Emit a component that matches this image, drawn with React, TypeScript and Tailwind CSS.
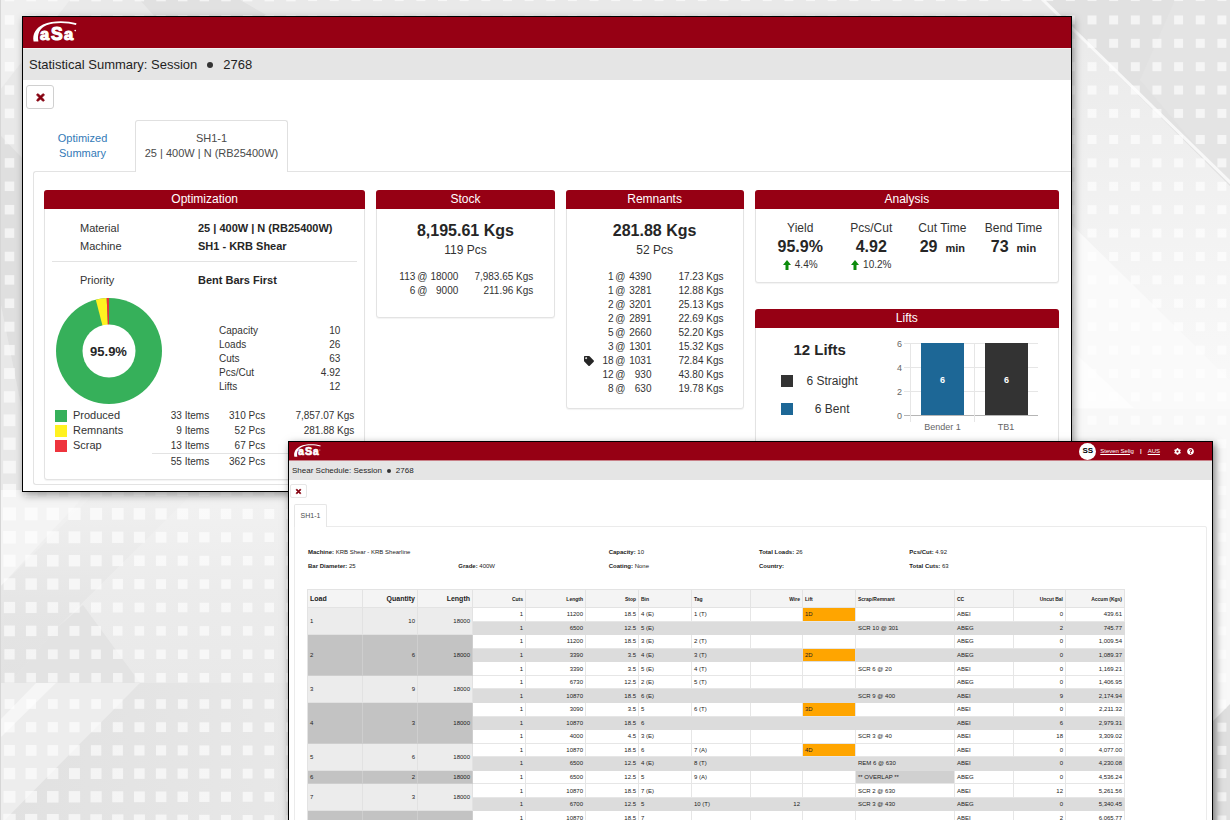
import type { ReactNode } from "react";
import { FaCog, FaQuestionCircle, FaTag, FaTimes } from "react-icons/fa";

/* ---------- Backdrop ---------- */

const range = (start: number, end: number, step: number) => {
  const out: number[] = [];
  for (let v = start; v <= end; v += step) out.push(v);
  return out;
};

const dotRows = [...range(-3.4, 114, 23.36), ...range(139.5, 679, 23.4), ...range(704, 825, 23.2)];
const dotCols = range(9.5, 1240, 21.65);

function dotSize(x: number, y: number) {
  if (x > 300) return 9;
  const near = Math.max(0, 1 - (Math.abs(y - 500) + x * 0.6) / 200);
  const low = y > 690 ? ((y - 690) / 130) * Math.max(0, 1 - x / 300) * 3 : 0;
  return 9.5 + near * 4 + low;
}

function Backdrop() {
  return (
    <svg
      aria-hidden="true"
      className="absolute inset-0 h-full w-full"
      viewBox="0 0 1230 820"
      preserveAspectRatio="xMidYMid slice"
    >
      <defs>
        <linearGradient id="fadeRight" x1="0" y1="0" x2="0" y2="1">
          <stop offset="0" stopColor="#e9e9e9" />
          <stop offset="0.6" stopColor="#f4f4f4" />
          <stop offset="1" stopColor="#fbfbfb" />
        </linearGradient>
        <linearGradient id="fadeLeft" x1="0" y1="0" x2="0" y2="1">
          <stop offset="0" stopColor="#f2f2f2" />
          <stop offset="0.5" stopColor="#ececec" />
          <stop offset="1" stopColor="#e9e9e9" />
        </linearGradient>
        <linearGradient id="fadeBand" x1="0" y1="0" x2="0" y2="1">
          <stop offset="0" stopColor="#f0f0f0" />
          <stop offset="0.6" stopColor="#e5e5e5" />
          <stop offset="1" stopColor="#e2e2e2" />
        </linearGradient>
        <linearGradient id="fadeShade" x1="0" y1="0" x2="1" y2="0">
          <stop offset="0" stopColor="#e1e1e1" />
          <stop offset="1" stopColor="#e8e8e8" />
        </linearGradient>
      </defs>
      <rect width="1230" height="820" fill="#e8e8e8" />
      <rect width="1230" height="17" fill="#e9e9e9" />
      <path d="M0 0H70L0 90Z" fill="#efefef" />
      <path d="M140 0H240L270 17H155Z" fill="#e1e1e1" />
      <path d="M0 300V135L24 160V420Z" fill="#dfdfdf" />
      <rect y="490" width="300" height="193" fill="url(#fadeLeft)" />
      <path d="M0 587L90 490H0Z" fill="#f4f4f4" />
      <path d="M0 587L90 498H188L57 628L10 683H0Z" fill="url(#fadeBand)" />
      <path d="M83 605L140 683H10L57 628Z" fill="#e3e3e3" />
      <path d="M0 683H140L5 820H0Z" fill="#ededed" />
      <path d="M36 683H56L0 738V720Z" fill="#f6f6f6" />
      <path d="M140 683L5 820H300V683Z" fill="url(#fadeShade)" />
      <rect x="1072" width="158" height="441" fill="url(#fadeRight)" />
      <path d="M1042 0H1230V186Z" fill="#e1e1e1" />
      <path d="M1140 80L1175 0H1230V186Z" fill="#e4e4e4" />
      <path d="M1041 -2L1232 184" stroke="#f8f8f8" strokeWidth="3" />
      <path d="M1072 225L1230 380V409H1072Z" fill="#fafafa" />
      <path d="M1072 350L1134 408H1072Z" fill="#fdfdfd" />
      <path d="M1072 409H1230V442H1072Z" fill="#f8f8f8" />
      <rect x="1212" y="441" width="18" height="280" fill="#f8f8f8" />
      <path d="M1212 722L1230 704V820H1212Z" fill="#dfdfdf" />
      <g fill="#ffffff" fillOpacity="0.62">
        {dotRows.map((y) =>
          dotCols.map((x) => {
            const s = dotSize(x, y);
            return <rect key={`${x}-${y}`} x={x - s / 2} y={y - s / 2} width={s} height={s} />;
          }),
        )}
      </g>
      <rect width="1" height="820" fill="#d6d6d6" />
    </svg>
  );
}

/* ---------- Shared pieces ---------- */

function Logo({ className }: { className: string }) {
  return (
    <svg viewBox="0 0 44 24" className={`overflow-visible ${className}`} role="img" aria-label="aSa">
      <path
        d="M0.600 20.500C-1 13 3 7 10 3.500C20 -0.800 34 -0.200 43.500 2.300L43 4C34 1.400 22 1 13.500 4.300C6.500 7.500 4 13 5.400 20.500Z"
        fill="#fff"
      />
      <g
        fill="#fff"
        stroke="#fff"
        strokeWidth="1.1"
        fontFamily="'Liberation Sans', Arial, sans-serif"
        fontWeight="700"
      >
        <text x="7" y="18.500" fontSize="16.500">a</text>
        <text x="18" y="18.500" fontSize="17.500">S</text>
        <text x="31" y="18.500" fontSize="16.500">a</text>
      </g>
      <circle cx="42.200" cy="9.600" r="0.8" fill="#fff" />
    </svg>
  );
}

function Card({ title, className, children }: { title: string; className?: string; children: ReactNode }) {
  return (
    <section className={`rounded-[3px] border border-[#e3e3e3] bg-white shadow-[0_1px_1px_#0000000d] ${className ?? ""}`}>
      <h2 className="-mx-px -mt-px h-[19px] rounded-t-[3px] bg-[#960014] text-center text-[12px] leading-[19px] text-white">
        {title}
      </h2>
      {children}
    </section>
  );
}

/* ---------- Statistical summary ---------- */

const point = (percent: number) => {
  const a = (percent / 100) * Math.PI * 2;
  return `${53 + 53 * Math.sin(a)} ${53 - 53 * Math.cos(a)}`;
};

const wedge = (from: number, to: number) => `M53 53L${point(from)}A53 53 0 0 1 ${point(to)}Z`;

function Donut() {
  return (
    <svg viewBox="0 0 106 106" className="h-[106px] w-[106px] shrink-0" role="img" aria-label="Yield">
      <circle cx="53" cy="53" r="53" fill="#36b05a" />
      <path d={wedge(96, 99.3)} fill="#fff220" />
      <path d={wedge(99.3, 100)} fill="#e8303a" />
      <circle cx="53" cy="53" r="26.500" fill="#fff" />
      <text
        x="52.500"
        y="58"
        textAnchor="middle"
        fontSize="13"
        fontWeight="700"
        fill="#262626"
        fontFamily="'Liberation Sans', Arial, sans-serif"
      >
        95.9%
      </text>
    </svg>
  );
}

const stats: [string, string][] = [
  ["Capacity", "10"],
  ["Loads", "26"],
  ["Cuts", "63"],
  ["Pcs/Cut", "4.92"],
  ["Lifts", "12"],
];

const breakdown = [
  { label: "Produced", swatch: "bg-[#36b05a]", items: "33 Items", pcs: "310 Pcs", kgs: "7,857.07 Kgs" },
  { label: "Remnants", swatch: "bg-[#fff220]", items: "9 Items", pcs: "52 Pcs", kgs: "281.88 Kgs" },
  { label: "Scrap", swatch: "bg-[#ee343d]", items: "13 Items", pcs: "67 Pcs", kgs: "" },
];

function OptimizationCard() {
  return (
    <Card title="Optimization" className="pb-[10px]">
      <dl className="grid grid-cols-[118px_1fr] pl-[35px] pt-[10px] text-[11px] leading-[18px]">
        <dt>Material</dt>
        <dd className="font-bold text-[#262626]">25 | 400W | N (RB25400W)</dd>
        <dt>Machine</dt>
        <dd className="font-bold text-[#262626]">SH1 - KRB Shear</dd>
      </dl>
      <hr className="mx-[7px] mt-[6px] border-[#e3e3e3]" />
      <dl className="mt-[9px] grid grid-cols-[118px_1fr] pl-[35px] text-[11px] leading-[18px]">
        <dt>Priority</dt>
        <dd className="font-bold text-[#262626]">Bent Bars First</dd>
      </dl>
      <div className="mt-[9px] flex items-start pl-[11px] pr-6">
        <Donut />
        <dl className="ml-[57px] mt-[26px] grid flex-1 grid-cols-[1fr_auto] text-[10px] leading-[14px]">
          {stats.map(([label, value]) => (
            <div key={label} className="contents">
              <dt>{label}</dt>
              <dd className="text-right">{value}</dd>
            </div>
          ))}
        </dl>
      </div>
      <div className="mt-1 px-[10px]">
        <table className="w-full table-fixed text-right text-[10px] leading-[15px]">
          <colgroup>
            <col className="w-[97px]" />
            <col className="w-[57px]" />
            <col className="w-[56px]" />
            <col className="w-[89px]" />
          </colgroup>
          <tbody>
            {breakdown.map((row) => (
              <tr key={row.label}>
                <th className="p-0 text-left text-[11px] font-normal">
                  <span className="flex items-center gap-[6px]">
                    <span className={`h-3 w-3 ${row.swatch}`} />
                    {row.label}
                  </span>
                </th>
                <td className="p-0">{row.items}</td>
                <td className="p-0">{row.pcs}</td>
                <td className="p-0">{row.kgs}</td>
              </tr>
            ))}
            <tr>
              <td className="p-0" />
              <td className="border-t border-[#e3e3e3] p-0">55 Items</td>
              <td className="border-t border-[#e3e3e3] p-0">362 Pcs</td>
              <td className="border-t border-[#e3e3e3] p-0" />
            </tr>
          </tbody>
        </table>
      </div>
    </Card>
  );
}

type Piece = { qty: number; length: number; kgs: string; tagged?: boolean };

const stock: Piece[] = [
  { qty: 113, length: 18000, kgs: "7,983.65 Kgs" },
  { qty: 6, length: 9000, kgs: "211.96 Kgs" },
];

const remnants: Piece[] = [
  { qty: 1, length: 4390, kgs: "17.23 Kgs" },
  { qty: 1, length: 3281, kgs: "12.88 Kgs" },
  { qty: 2, length: 3201, kgs: "25.13 Kgs" },
  { qty: 2, length: 2891, kgs: "22.69 Kgs" },
  { qty: 5, length: 2660, kgs: "52.20 Kgs" },
  { qty: 3, length: 1301, kgs: "15.32 Kgs" },
  { qty: 18, length: 1031, kgs: "72.84 Kgs", tagged: true },
  { qty: 12, length: 930, kgs: "43.80 Kgs" },
  { qty: 8, length: 630, kgs: "19.78 Kgs" },
];

function PieceCard({
  title,
  total,
  pcs,
  pieces,
  columns,
  className,
}: {
  title: string;
  total: string;
  pcs: string;
  pieces: Piece[];
  columns: string;
  className: string;
}) {
  return (
    <Card title={title} className={className}>
      <p className="pt-3 text-center text-[16px] font-bold leading-[20px] text-[#262626]">{total}</p>
      <p className="text-center text-[12px] leading-[18px]">{pcs}</p>
      <ul className="mt-[11px] text-[10px] leading-[14px]">
        {pieces.map((p) => (
          <li key={p.length} className={`grid ${columns} text-right`}>
            <span className="flex items-center justify-end gap-2">
              {p.tagged && <FaTag className="h-[10px] w-[10px] text-[#262626]" />}
              {p.qty}
            </span>
            <span>@</span>
            <span>{p.length}</span>
            <span>{p.kgs}</span>
          </li>
        ))}
      </ul>
    </Card>
  );
}

const analysis = [
  { label: "Yield", value: "95.9%", delta: "4.4%" },
  { label: "Pcs/Cut", value: "4.92", delta: "10.2%" },
  { label: "Cut Time", value: "29", unit: "min" },
  { label: "Bend Time", value: "73", unit: "min" },
];

function UpArrow() {
  return (
    <svg viewBox="0 0 8 10" className="h-[10px] w-2" aria-hidden="true">
      <path d="M4 0L8 5H5.500V10H2.500V5H0Z" fill="#0b8a0b" />
    </svg>
  );
}

function AnalysisCard() {
  return (
    <Card title="Analysis" className="pb-[9px]">
      <div className="grid grid-cols-4 px-[9px] pt-[10px] text-center">
        {analysis.map((a) => (
          <div key={a.label}>
            <p className="text-[12px] leading-[18px]">{a.label}</p>
            <p className="text-[16px] font-bold leading-[20px] text-[#262626]">
              {a.value}
              {a.unit && <span className="ml-2 text-[11px]">{a.unit}</span>}
            </p>
            {a.delta && (
              <p className="flex items-center justify-center gap-1 text-[10px] leading-[16px]">
                <UpArrow />
                {a.delta}
              </p>
            )}
          </div>
        ))}
      </div>
    </Card>
  );
}

function LiftsChart() {
  const ticks = [6, 4, 2, 0];
  return (
    <svg
      viewBox="0 0 150 100"
      className="h-[100px] w-[150px] shrink-0"
      fontFamily="'Liberation Sans', Arial, sans-serif"
      role="img"
      aria-label="Lifts by machine"
    >
      {ticks.map((t, i) => (
        <g key={t}>
          <path d={`M14 ${8.5 + i * 24}H148`} stroke={t === 0 ? "#b5b5b5" : "#e6e6e6"} />
          <text x="12" y={11.5 + i * 24} textAnchor="end" fontSize="9" fill="#666">
            {t}
          </text>
        </g>
      ))}
      <path d="M20.500 8V87M84.500 8V87" stroke="#e6e6e6" />
      <rect x="31" y="8" width="43" height="72" fill="#1d6796" />
      <rect x="95" y="8" width="43" height="72" fill="#333" />
      <g fontSize="9" fontWeight="700" fill="#fff" textAnchor="middle">
        <text x="52.500" y="48">6</text>
        <text x="116.500" y="48">6</text>
      </g>
      <g fontSize="9" fill="#666" textAnchor="middle">
        <text x="52.500" y="95">Bender 1</text>
        <text x="116" y="95">TB1</text>
      </g>
    </svg>
  );
}

function LiftsCard() {
  return (
    <Card title="Lifts" className="mt-[26px] pb-5">
      <div className="flex justify-between">
        <div className="w-[128px] pt-3 text-[12px]">
          <p className="text-center text-[15px] font-bold leading-[20px] text-[#262626]">12 Lifts</p>
          <ul className="mt-[7px] pl-[25px] pr-3 leading-[28px]">
            <li className="flex items-center">
              <span className="h-3 w-3 bg-[#333]" />
              <span className="flex-1 text-center">6 Straight</span>
            </li>
            <li className="flex items-center">
              <span className="h-3 w-3 bg-[#1d6796]" />
              <span className="flex-1 text-center">6 Bent</span>
            </li>
          </ul>
        </div>
        <div className="pr-[18px] pt-[7px]">
          <LiftsChart />
        </div>
      </div>
    </Card>
  );
}

function SummaryWindow() {
  return (
    <section className="absolute left-[22px] right-[158px] top-4 border border-black bg-white shadow-[2px_3px_8px_#00000066]">
      <header className="flex h-[31px] items-center bg-[#960014] pl-[10px]">
        <Logo className="h-6 w-[44px]" />
      </header>
      <h1 className="flex h-8 items-center gap-[10px] border-t border-[#f2f2f2] bg-[#e5e5e5] pl-[6px] text-[13px] text-[#1f1f1f]">
        Statistical Summary: Session
        <span className="h-[6px] w-[6px] rounded-full bg-[#333]" />
        2768
      </h1>
      <div className="px-[3px] pt-[5px]">
        <button
          type="button"
          aria-label="Close"
          className="flex h-6 w-7 items-center justify-center rounded-[3px] border border-[#d0d0d0] bg-white"
        >
          <FaTimes className="h-[11px] w-[11px] stroke-current stroke-[40px] text-[#85000f]" />
        </button>
      </div>
      <nav className="mt-[11px] flex pl-[10px] text-center text-[11px] leading-[15px]">
        <a href="#optimized" className="mr-[3px] flex w-[99px] flex-col pt-[11px] text-[#337ab7]">
          <span>Optimized</span>
          <span>Summary</span>
        </a>
        <a
          href="#sh1"
          className="relative -mb-px flex w-[153px] flex-col rounded-t-[3px] border border-b-0 border-[#e0e0e0] bg-white pb-[11px] pt-[10px] text-[#4a4a4a]"
        >
          <span>SH1-1</span>
          <span>25 | 400W | N (RB25400W)</span>
        </a>
      </nav>
      <div className="mb-[6px] ml-[10px] grid grid-cols-[321fr_178fr_178fr_304fr] items-start gap-[11px] rounded-l-[3px] border border-r-0 border-[#e3e3e3] pb-1 pl-[10px] pr-3 pt-[18px]">
        <OptimizationCard />
        <PieceCard
          title="Stock"
          total="8,195.61 Kgs"
          pcs="119 Pcs"
          pieces={stock}
          columns="grid-cols-[38px_12px_31px_75px]"
          className="pb-[19px]"
        />
        <PieceCard
          title="Remnants"
          total="281.88 Kgs"
          pcs="52 Pcs"
          pieces={remnants}
          columns="grid-cols-[47px_12px_26px_72px]"
          className="pb-3"
        />
        <div>
          <AnalysisCard />
          <LiftsCard />
        </div>
      </div>
    </section>
  );
}

/* ---------- Shear schedule ---------- */

type Cut = {
  length: string;
  stop: string;
  bin: string;
  tag?: string;
  wire?: string;
  lift?: string;
  scrap?: string;
  cc: string;
  bal: number;
  accum: string;
};

type Load = { load: string; qty: string; length: string; cuts: Cut[] };

const loads: Load[] = [
  {
    load: "1", qty: "10", length: "18000",
    cuts: [
      { length: "11200", stop: "18.5", bin: "4 (E)", tag: "1 (T)", lift: "1D", cc: "ABEI", bal: 0, accum: "439.61" },
      { length: "6500", stop: "12.5", bin: "5 (E)", scrap: "SCR 10 @ 301", cc: "ABEG", bal: 2, accum: "745.77" },
    ],
  },
  {
    load: "2", qty: "6", length: "18000",
    cuts: [
      { length: "11200", stop: "18.5", bin: "3 (E)", tag: "2 (T)", cc: "ABEG", bal: 0, accum: "1,009.54" },
      { length: "3390", stop: "3.5", bin: "4 (E)", tag: "3 (T)", lift: "2D", cc: "ABEG", bal: 0, accum: "1,089.37" },
      { length: "3390", stop: "3.5", bin: "5 (E)", tag: "4 (T)", scrap: "SCR 6 @ 20", cc: "ABEI", bal: 0, accum: "1,169.21" },
    ],
  },
  {
    load: "3", qty: "9", length: "18000",
    cuts: [
      { length: "6730", stop: "12.5", bin: "2 (E)", tag: "5 (T)", cc: "ABEG", bal: 0, accum: "1,406.95" },
      { length: "10870", stop: "18.5", bin: "6 (E)", scrap: "SCR 9 @ 400", cc: "ABEI", bal: 9, accum: "2,174.94" },
    ],
  },
  {
    load: "4", qty: "3", length: "18000",
    cuts: [
      { length: "3090", stop: "3.5", bin: "5", tag: "6 (T)", lift: "3D", cc: "ABEI", bal: 0, accum: "2,211.32" },
      { length: "10870", stop: "18.5", bin: "6", cc: "ABEI", bal: 6, accum: "2,979.31" },
      { length: "4000", stop: "4.5", bin: "3 (E)", scrap: "SCR 3 @ 40", cc: "ABEI", bal: 18, accum: "3,309.02" },
    ],
  },
  {
    load: "5", qty: "6", length: "18000",
    cuts: [
      { length: "10870", stop: "18.5", bin: "6", tag: "7 (A)", lift: "4D", cc: "ABEI", bal: 0, accum: "4,077.00" },
      { length: "6500", stop: "12.5", bin: "4 (E)", tag: "8 (T)", scrap: "REM 6 @ 630", cc: "ABEI", bal: 0, accum: "4,230.08" },
    ],
  },
  {
    load: "6", qty: "2", length: "18000",
    cuts: [
      { length: "6500", stop: "12.5", bin: "5", tag: "9 (A)", scrap: "** OVERLAP **", cc: "ABEG", bal: 0, accum: "4,536.24" },
    ],
  },
  {
    load: "7", qty: "3", length: "18000",
    cuts: [
      { length: "10870", stop: "18.5", bin: "7 (E)", scrap: "SCR 2 @ 630", cc: "ABEI", bal: 12, accum: "5,261.56" },
      { length: "6700", stop: "12.5", bin: "5", tag: "10 (T)", wire: "12", scrap: "SCR 3 @ 430", cc: "ABEG", bal: 0, accum: "5,340.45" },
    ],
  },
  {
    load: "", qty: "", length: "",
    cuts: [{ length: "10870", stop: "18.5", bin: "7", cc: "ABEI", bal: 2, accum: "6,065.77" }],
  },
];

const columns = [
  { label: "Load", width: "w-[55px]", head: "text-left text-[7px]" },
  { label: "Quantity", width: "w-[55px]", head: "text-right text-[7px]" },
  { label: "Length", width: "w-[55px]", head: "text-right text-[7px]" },
  { label: "Cuts", width: "w-[53px]", head: "text-right text-[5px]" },
  { label: "Length", width: "w-[60px]", head: "text-right text-[5px]" },
  { label: "Stop", width: "w-[53px]", head: "text-right text-[5px]" },
  { label: "Bin", width: "w-[53px]", head: "text-left text-[5px]" },
  { label: "Tag", width: "w-[59px]", head: "text-left text-[5px]" },
  { label: "Wire", width: "w-[52px]", head: "text-right text-[5px]" },
  { label: "Lift", width: "w-[53px]", head: "text-left text-[5px]" },
  { label: "Scrap/Remnant", width: "w-[99px]", head: "text-left text-[5px]" },
  { label: "CC", width: "w-[59px]", head: "text-left text-[5px]" },
  { label: "Uncut Bal", width: "w-[52px]", head: "text-right text-[5px]" },
  { label: "Accum (Kgs)", width: "w-[59px]", head: "text-right text-[5px]" },
];

function LoadRows({ load, dark }: { load: Load; dark: boolean }) {
  const group = dark ? "border-[#cecece] bg-[#c3c3c3]" : "border-[#e2e2e2] bg-[#ececec]";
  return (
    <>
      {load.cuts.map((cut, i) => {
        const shaded = i % 2 === 1;
        const line = shaded ? "border-[#dcdcdc]" : "border-[#e6e6e6]";
        const cell = `border-r border-b px-[2px] py-0 ${line}`;
        return (
          <tr key={i} className={shaded ? "bg-[#dcdcdc]" : "bg-white"}>
            {i === 0 && (
              <>
                <td rowSpan={load.cuts.length} className={`border-b border-r px-[2px] py-0 ${group}`}>{load.load}</td>
                <td rowSpan={load.cuts.length} className={`border-b border-r px-[2px] py-0 text-right ${group}`}>{load.qty}</td>
                <td rowSpan={load.cuts.length} className={`border-b border-r px-[2px] py-0 text-right ${group}`}>{load.length}</td>
              </>
            )}
            <td className={`${cell} text-right`}>1</td>
            <td className={`${cell} text-right`}>{cut.length}</td>
            <td className={`${cell} text-right`}>{cut.stop}</td>
            <td className={cell}>{cut.bin}</td>
            <td className={cell}>{cut.tag}</td>
            <td className={`${cell} text-right`}>{cut.wire}</td>
            <td className={`${cell} ${cut.lift ? "bg-[#ffa500]" : ""}`}>{cut.lift}</td>
            <td className={`${cell} ${cut.scrap === "** OVERLAP **" ? "bg-[#d0d0d0]" : ""}`}>{cut.scrap}</td>
            <td className={cell}>{cut.cc}</td>
            <td className={`${cell} text-right`}>{cut.bal}</td>
            <td className={`${cell} text-right`}>{cut.accum}</td>
          </tr>
        );
      })}
    </>
  );
}

function Meta({ label, value }: { label: string; value: string }) {
  return (
    <p>
      <b>{label}:</b> {value}
    </p>
  );
}

function ScheduleWindow() {
  return (
    <section className="absolute left-[288px] right-[17px] top-[441px] border border-black bg-white text-[#222] shadow-[2px_3px_8px_#00000080]">
      <header className="flex h-[19px] items-center justify-between border-b border-[#c98088] bg-[#960014] pl-[5px] pr-[18px] text-[6px] text-white">
        <Logo className="h-[15px] w-[27px]" />
        <div className="flex items-center">
          <span className="flex h-[17px] w-[17px] items-center justify-center rounded-full bg-white text-[8px] font-bold text-black">
            SS
          </span>
          <a href="#user" className="ml-1 underline">Steven Selig</a>
          <span className="mx-[6px] font-bold">|</span>
          <a href="#region" className="underline">AUS</a>
          <button type="button" aria-label="Settings" className="ml-[14px]">
            <FaCog className="h-[7px] w-[7px]" />
          </button>
          <button type="button" aria-label="Help" className="ml-[6px]">
            <FaQuestionCircle className="h-[7px] w-[7px]" />
          </button>
        </div>
      </header>
      <h1 className="flex h-[19px] items-center gap-[5px] bg-[#e5e5e5] pl-[3px] text-[8px] text-[#1f1f1f]">
        Shear Schedule: Session
        <span className="h-1 w-1 rounded-full bg-[#333]" />
        2768
      </h1>
      <div className="px-px pt-1">
        <button
          type="button"
          aria-label="Close"
          className="flex h-[14px] w-[17px] items-center justify-center rounded-[2px] border border-[#e6e6e6] bg-white"
        >
          <FaTimes className="h-[7px] w-[7px] stroke-current stroke-[40px] text-[#85000f]" />
        </button>
      </div>
      <nav className="mt-[6px] flex px-[5px] text-center text-[7px] leading-[22px]">
        <a
          href="#schedule"
          className="relative -mb-px w-[33px] rounded-t-[2px] border border-b-0 border-[#e6e6e6] bg-white text-[#4a4a4a]"
        >
          SH1-1
        </a>
      </nav>
      <div className="mx-[5px] rounded-tr-[2px] border border-[#ebebeb] pb-6 pt-[18px] text-[6px]">
        <div className="-mr-1 ml-[13px] grid grid-cols-6 leading-[14px]">
          <div>
            <Meta label="Machine" value="KRB Shear - KRB Shearline" />
            <Meta label="Bar Diameter" value="25" />
          </div>
          <div className="pt-[14px]">
            <Meta label="Grade" value="400W" />
          </div>
          <div>
            <Meta label="Capacity" value="10" />
            <Meta label="Coating" value="None" />
          </div>
          <div>
            <Meta label="Total Loads" value="26" />
            <Meta label="Country" value="" />
          </div>
          <div>
            <Meta label="Pcs/Cut" value="4.92" />
            <Meta label="Total Cuts" value="63" />
          </div>
        </div>
        <div className="ml-3 mr-[82px] mt-4">
          <table className="h-[236px] w-full table-fixed border-separate border-spacing-0 border-l border-t border-[#e3e3e3] text-left leading-[8px]">
            <colgroup>
              {columns.map((c, i) => (
                <col key={i} className={c.width} />
              ))}
            </colgroup>
            <thead>
              <tr className="h-[18px]">
                {columns.map((c, i) => (
                  <th
                    key={i}
                    scope="col"
                    className={`border-b border-r border-[#e3e3e3] bg-[#f4f4f4] px-[2px] py-0 font-bold ${c.head}`}
                  >
                    {c.label}
                  </th>
                ))}
              </tr>
            </thead>
            <tbody>
              {loads.map((load, i) => (
                <LoadRows key={i} load={load} dark={i % 2 === 1} />
              ))}
            </tbody>
          </table>
        </div>
      </div>
    </section>
  );
}

export default function App() {
  return (
    <main className="relative h-screen overflow-hidden bg-[#e7e7e7] font-['Liberation_Sans',Arial,sans-serif] text-[#333]">
      <Backdrop />
      <SummaryWindow />
      <ScheduleWindow />
    </main>
  );
}
